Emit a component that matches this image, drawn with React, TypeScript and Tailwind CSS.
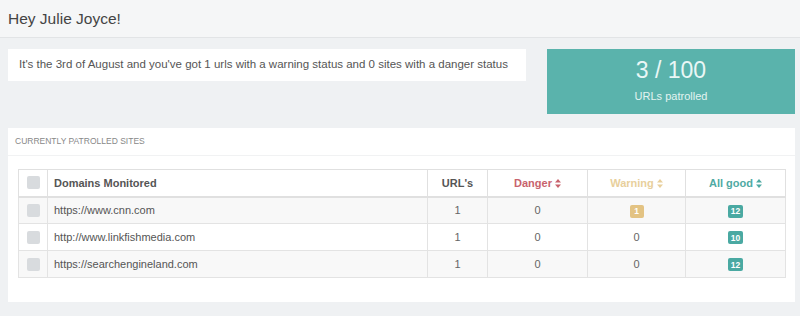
import React from "react"

type Site = {
  domain: string
  urls: number
  danger: number
  warning: number
  good: number
  striped: boolean
}

const SITES: Site[] = [
  { domain: "https://www.cnn.com", urls: 1, danger: 0, warning: 1, good: 12, striped: true },
  { domain: "http://www.linkfishmedia.com", urls: 1, danger: 0, warning: 0, good: 10, striped: false },
  { domain: "https://searchengineland.com", urls: 1, danger: 0, warning: 0, good: 12, striped: true },
]

function SortIcon({ color }: { color: string }) {
  return (
    <svg width="6" height="9" viewBox="0 0 6 9" className="inline-block ml-[3px] -mt-[1px]">
      <path d="M3 0 L6 3.6 L0 3.6 Z" fill={color} />
      <path d="M3 9 L6 5.4 L0 5.4 Z" fill={color} />
    </svg>
  )
}

function Checkbox() {
  return <span className="block w-[13px] h-[13px] rounded-[2px] bg-[#d8dbde] mx-auto" />
}

function Badge({ value, color }: { value: number; color: string }) {
  return (
    <span
      className={`inline-flex items-center justify-center h-[13px] min-w-[14px] px-[3px] rounded-[2px] text-[8.5px] font-bold text-white leading-none align-middle ${color}`}
    >
      {value}
    </span>
  )
}

export default function App() {
  return (
    <div
      className="w-[800px] h-[316px] bg-[#eff1f3] text-[#555] overflow-hidden"
      style={{ fontFamily: '"Liberation Sans", Arial, sans-serif' }}
    >
      {/* Header */}
      <div className="h-[38px] bg-[#f5f6f7] border-b border-[#e2e4e6] px-2 flex items-center">
        <h1 className="text-[15.5px] text-[#444]">Hey Julie Joyce!</h1>
      </div>

      <div className="pl-2 pr-[5px]">
        {/* Summary */}
        <div className="mt-[11px] flex justify-between items-start">
          <div className="w-[518px] h-[32px] bg-white px-[11px] flex items-center text-[11.5px] text-[#555]">
            It's the 3rd of August and you've got 1 urls with a warning status and 0 sites with a danger status
          </div>
          <div className="w-[248px] h-[65px] bg-[#5ab3ac] text-white flex flex-col items-center justify-center">
            <div className="text-[23px] font-light leading-none text-[#eaf7f6]">3 / 100</div>
            <div className="text-[11px] mt-[6px] text-[#e3f3f1]">URLs patrolled</div>
          </div>
        </div>

        {/* Card */}
        <div className="mt-[14px] bg-white h-[174px]">
          <div className="h-[28px] px-[7px] flex items-center border-b border-[#f1f2f3] text-[8.5px] uppercase text-[#888]">
            Currently patrolled sites
          </div>
          <div className="px-[10px] pt-[13px]">
            <table className="w-[767px] border-collapse table-fixed text-[11px]">
              <colgroup>
                <col className="w-[29px]" />
                <col className="w-[380px]" />
                <col className="w-[60px]" />
                <col className="w-[100px]" />
                <col className="w-[98px]" />
                <col className="w-[100px]" />
              </colgroup>
              <thead>
                <tr className="h-[27px] bg-white">
                  <th className="border border-[#e0e0e0] border-b-2">
                    <Checkbox />
                  </th>
                  <th className="border border-[#e0e0e0] border-b-2 text-left pl-[6px] font-bold text-[#555]">
                    Domains Monitored
                  </th>
                  <th className="border border-[#e0e0e0] border-b-2 font-bold text-[#555]">URL's</th>
                  <th className="border border-[#e0e0e0] border-b-2 font-bold text-[#c8636d]">
                    Danger
                    <SortIcon color="#c8636d" />
                  </th>
                  <th className="border border-[#e0e0e0] border-b-2 font-bold text-[#e8cf9c]">
                    Warning
                    <SortIcon color="#e8cf9c" />
                  </th>
                  <th className="border border-[#e0e0e0] border-b-2 font-bold text-[#4faaa3]">
                    All good
                    <SortIcon color="#4faaa3" />
                  </th>
                </tr>
              </thead>
              <tbody>
                {SITES.map((s) => (
                  <tr key={s.domain} className={`h-[27px] ${s.striped ? "bg-[#f8f8f8]" : "bg-white"}`}>
                    <td className="border border-[#e3e3e3]">
                      <Checkbox />
                    </td>
                    <td className="border border-[#e3e3e3] pl-[6px] text-[#555]">{s.domain}</td>
                    <td className="border border-[#e3e3e3] text-center text-[#666]">{s.urls}</td>
                    <td className="border border-[#e3e3e3] text-center text-[#666]">{s.danger}</td>
                    <td className="border border-[#e3e3e3] text-center text-[#666]">
                      {s.warning > 0 ? <Badge value={s.warning} color="bg-[#e3c383]" /> : s.warning}
                    </td>
                    <td className="border border-[#e3e3e3] text-center">
                      <Badge value={s.good} color="bg-[#4aa9a2]" />
                    </td>
                  </tr>
                ))}
              </tbody>
            </table>
          </div>
        </div>
      </div>
    </div>
  )
}
